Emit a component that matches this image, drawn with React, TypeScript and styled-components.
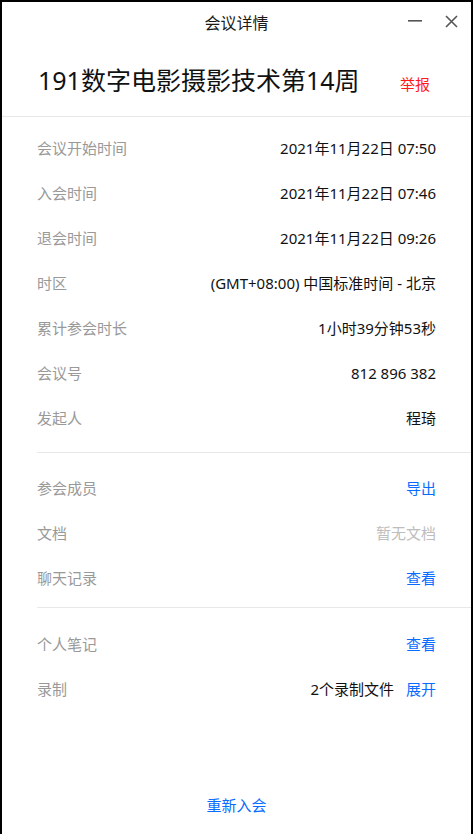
import React from 'react';
import styled, { createGlobalStyle } from 'styled-components';

const GlobalStyle = createGlobalStyle`
  html, body {
    margin: 0;
    padding: 0;
    background: #000;
  }
  body {
    font-family: "Noto Sans", "Noto Sans CJK SC", sans-serif;
  }
`;

const Frame = styled.div`
  width: 473px;
  height: 834px;
  box-sizing: border-box;
  padding: 2px 2px 0 2px;
  background: #000;
`;

const Window = styled.div`
  height: 100%;
  background: #fff;
  display: flex;
  flex-direction: column;
`;

const TitleBar = styled.div`
  height: 40px;
  position: relative;
  display: flex;
  align-items: center;
  justify-content: center;
  font-size: 16px;
  color: #1a1a1a;
`;

const WinButtons = styled.div`
  position: absolute;
  right: 9px;
  top: 10px;
  display: flex;
  gap: 14px;
  align-items: center;
`;

const WinButton = styled.div`
  width: 22px;
  height: 18px;
  display: flex;
  align-items: center;
  justify-content: center;
`;

const Header = styled.div`
  height: 74px;
  display: flex;
  align-items: center;
  justify-content: space-between;
  padding: 0 41px 0 36px;
  border-bottom: 1px solid #e8e8e8;
`;

const MeetingTitle = styled.div`
  font-size: 25px;
  line-height: 30px;
  color: #111;
  margin-top: 2px;
`;

const Report = styled.div`
  font-size: 15px;
  color: #ff1a1a;
  margin-top: 8px;
`;

const Section = styled.div<{ $top: number; $bottom: number; $line?: boolean }>`
  margin-left: 35px;
  padding: ${(p) => p.$top}px 35px ${(p) => p.$bottom}px 0;
  border-bottom: ${(p) => (p.$line ? '1px solid #e8e8e8' : 'none')};
`;

const Row = styled.div`
  height: 45px;
  box-sizing: border-box;
  padding-bottom: 6px;
  display: flex;
  align-items: center;
  justify-content: space-between;
  font-size: 15px;
`;

const Label = styled.span`
  color: #999;
`;

const Value = styled.span<{ $tone?: 'dark' | 'link' | 'muted' }>`
  color: ${(p) => (p.$tone === 'link' ? '#0a6cff' : p.$tone === 'muted' ? '#bdbdbd' : '#111')};
  display: flex;
  gap: 12px;
`;

const Link = styled.span`
  color: #0a6cff;
`;

const Footer = styled.div`
  margin-top: auto;
  height: 40px;
  display: flex;
  justify-content: center;
  font-size: 15px;
  color: #0a6cff;
`;

const infoRows: [string, string][] = [
  ['会议开始时间', '2021年11月22日 07:50'],
  ['入会时间', '2021年11月22日 07:46'],
  ['退会时间', '2021年11月22日 09:26'],
  ['时区', '(GMT+08:00) 中国标准时间 - 北京'],
  ['累计参会时长', '1小时39分钟53秒'],
  ['会议号', '812 896 382'],
  ['发起人', '程琦'],
];

export default function App() {
  return (
    <>
      <GlobalStyle />
      <Frame>
        <Window>
          <TitleBar>
            会议详情
            <WinButtons>
              <WinButton>
                <svg width="16" height="4" viewBox="0 0 16 4">
                  <rect x="1" y="1" width="14" height="1.6" fill="#555" />
                </svg>
              </WinButton>
              <WinButton>
                <svg width="13" height="13" viewBox="0 0 13 13">
                  <path d="M1 1 L12 12 M12 1 L1 12" stroke="#555" strokeWidth="1.6" />
                </svg>
              </WinButton>
            </WinButtons>
          </TitleBar>
          <Header>
            <MeetingTitle>191数字电影摄影技术第14周</MeetingTitle>
            <Report>举报</Report>
          </Header>
          <Section $top={11} $bottom={9} $line>
            {infoRows.map(([k, v]) => (
              <Row key={k}>
                <Label>{k}</Label>
                <Value>{v}</Value>
              </Row>
            ))}
          </Section>
          <Section $top={15} $bottom={4} $line>
            <Row>
              <Label>参会成员</Label>
              <Value $tone="link">导出</Value>
            </Row>
            <Row>
              <Label>文档</Label>
              <Value $tone="muted">暂无文档</Value>
            </Row>
            <Row>
              <Label>聊天记录</Label>
              <Value $tone="link">查看</Value>
            </Row>
          </Section>
          <Section $top={16} $bottom={0}>
            <Row>
              <Label>个人笔记</Label>
              <Value $tone="link">查看</Value>
            </Row>
            <Row>
              <Label>录制</Label>
              <Value>
                2个录制文件<Link>展开</Link>
              </Value>
            </Row>
          </Section>
          <Footer>重新入会</Footer>
        </Window>
      </Frame>
    </>
  );
}
